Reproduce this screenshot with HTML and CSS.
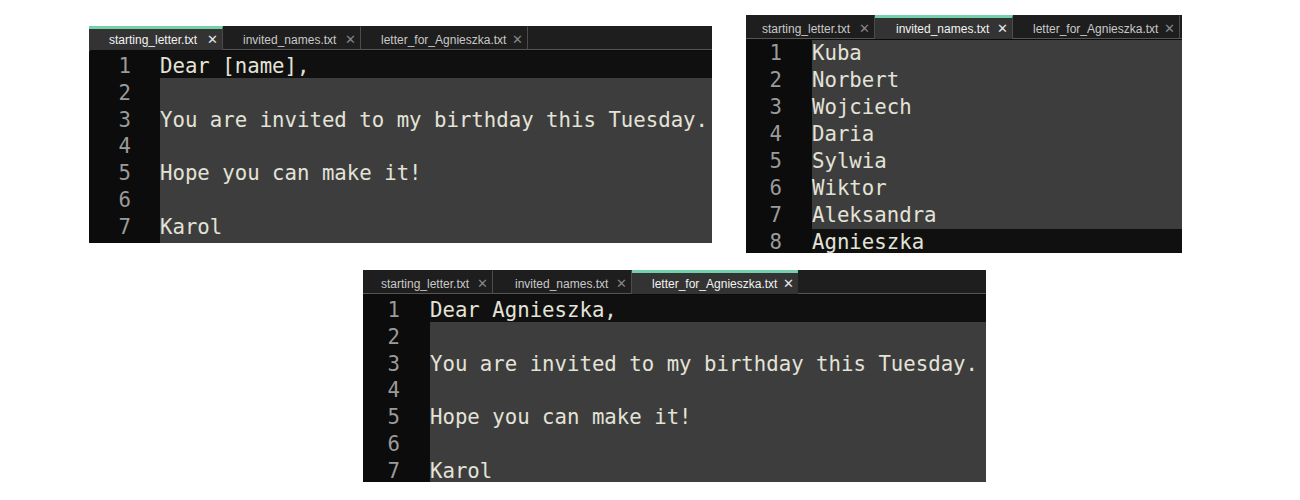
FILE: index.html
```html
<!DOCTYPE html>
<html>
<head>
<meta charset="utf-8">
<link rel="stylesheet" href="styles.css">
</head>
<body>
<div class="page">
  <div class="row row-top">
    <section class="panel panel-a">
      <div class="tabbar">
        <div class="tab active t1"><span class="name">starting_letter.txt</span><span class="x">✕</span></div>
        <div class="tab t2"><span class="name">invited_names.txt</span><span class="x">✕</span></div>
        <div class="tab t3"><span class="name">letter_for_Agnieszka.txt</span><span class="x">✕</span></div>
      </div>
      <div class="editor">
        <div class="gutter">
          <div class="num">1</div><div class="num">2</div><div class="num">3</div><div class="num">4</div><div class="num">5</div><div class="num">6</div><div class="num">7</div>
        </div>
        <div class="code">
          <div class="line cur">Dear [name],</div>
          <div class="line"></div>
          <div class="line">You are invited to my birthday this Tuesday.</div>
          <div class="line"></div>
          <div class="line">Hope you can make it!</div>
          <div class="line"></div>
          <div class="line">Karol</div>
        </div>
      </div>
    </section>
    <section class="panel panel-b">
      <div class="tabbar">
        <div class="tab t1"><span class="name">starting_letter.txt</span><span class="x">✕</span></div>
        <div class="tab active t2"><span class="name">invited_names.txt</span><span class="x">✕</span></div>
        <div class="tab t3"><span class="name">letter_for_Agnieszka.txt</span><span class="x">✕</span></div>
      </div>
      <div class="editor">
        <div class="gutter">
          <div class="num">1</div><div class="num">2</div><div class="num">3</div><div class="num">4</div><div class="num">5</div><div class="num">6</div><div class="num">7</div><div class="num">8</div>
        </div>
        <div class="code">
          <div class="line">Kuba</div>
          <div class="line">Norbert</div>
          <div class="line">Wojciech</div>
          <div class="line">Daria</div>
          <div class="line">Sylwia</div>
          <div class="line">Wiktor</div>
          <div class="line">Aleksandra</div>
          <div class="line cur">Agnieszka</div>
        </div>
      </div>
    </section>
  </div>
  <div class="row row-bottom">
    <section class="panel panel-c">
      <div class="tabbar">
        <div class="tab t1"><span class="name">starting_letter.txt</span><span class="x">✕</span></div>
        <div class="tab t2"><span class="name">invited_names.txt</span><span class="x">✕</span></div>
        <div class="tab active t3"><span class="name">letter_for_Agnieszka.txt</span><span class="x">✕</span></div>
      </div>
      <div class="editor">
        <div class="gutter">
          <div class="num">1</div><div class="num">2</div><div class="num">3</div><div class="num">4</div><div class="num">5</div><div class="num">6</div><div class="num">7</div>
        </div>
        <div class="code">
          <div class="line cur">Dear Agnieszka,</div>
          <div class="line"></div>
          <div class="line">You are invited to my birthday this Tuesday.</div>
          <div class="line"></div>
          <div class="line">Hope you can make it!</div>
          <div class="line"></div>
          <div class="line">Karol</div>
        </div>
      </div>
    </section>
  </div>
</div>
</body>
</html>
```
FILE: styles.css
```css
html, body {
  margin: 0;
  padding: 0;
  background: #ffffff;
}

.page {
  width: 1300px;
  height: 500px;
  overflow: hidden;
}

.row {
  display: flex;
  align-items: flex-start;
}

.row-top {
  padding-top: 15px;
  padding-left: 89px;
  gap: 34px;
}

.row-bottom {
  padding-top: 17px;
  padding-left: 363px;
}

.panel {
  display: flex;
  flex-direction: column;
  overflow: hidden;
  background: #0c0c0c;
}

.panel-a {
  width: 623px;
  height: 217px;
  margin-top: 11px;
  box-shadow: inset 1px 0 0 #5a5a5a;
}

.panel-b {
  width: 436px;
  height: 238px;
}

.panel-c {
  width: 623px;
  height: 212px;
}

/* tab bar */
.tabbar {
  display: flex;
  height: 24px;
  flex: none;
  background: #1e1e1e;
  box-shadow: inset 0 -1px 0 #555555;
  font-family: "Liberation Sans", Arial, sans-serif;
  font-size: 12px;
}

.tab {
  display: flex;
  align-items: center;
  box-sizing: border-box;
  height: 24px;
  padding: 2px 0 0 20px;
  border-top: 1px solid transparent;
  border-right: 1px solid #4c4c4c;
  color: #c9c9c9;
  flex: none;
}

.tab .name {
  flex: 1;
  white-space: nowrap;
}

.tab .x {
  width: 10px;
  margin-right: 5px;
  font-size: 13px;
  color: #858585;
  text-align: center;
}

.tab.active {
  background: #333333;
  color: #f2f2f2;
  border-top: 3px solid #74d0aa;
  padding-top: 0;
}

.tab.active .x {
  color: #e6e6e6;
}

.panel-a .t1 { width: 134px; }
.panel-a .t2 { width: 138px; }
.panel-a .t3 { width: 167px; }

.panel-b .t1 { width: 129px; padding-left: 16px; }
.panel-b .t2 { width: 138px; padding-left: 21px; }
.panel-b .t3 { width: 167px; }

.panel-c .t1 { width: 130px; padding-left: 18px; }
.panel-c .t2 { width: 139px; padding-left: 22px; }
.panel-c .t3 { width: 166px; border-right: none; }

/* editor */
.editor {
  display: flex;
  flex: 1;
  min-height: 0;
  margin-top: 1px;
  font-family: "DejaVu Sans Mono", "Liberation Mono", monospace;
  font-size: 20.7px;
  line-height: 30px;
}

.panel-b .editor {
  line-height: 27.5px;
}

.gutter {
  flex: none;
  width: 67px;
  box-sizing: border-box;
  padding-right: 30px;
  text-align: right;
  color: #9b9b9b;
  background: #0c0c0c;
}

.panel-a .gutter {
  width: 71px;
  padding-right: 29px;
}

.panel-b .gutter {
  width: 66px;
}

.code {
  flex: 1;
  background: #3d3d3d;
  color: #e3e3d8;
}

.line,
.num {
  height: 26.8px;
  white-space: pre;
}

.panel-b .line,
.panel-b .num {
  height: 27px;
}

.line.cur {
  background: #101010;
}
```
